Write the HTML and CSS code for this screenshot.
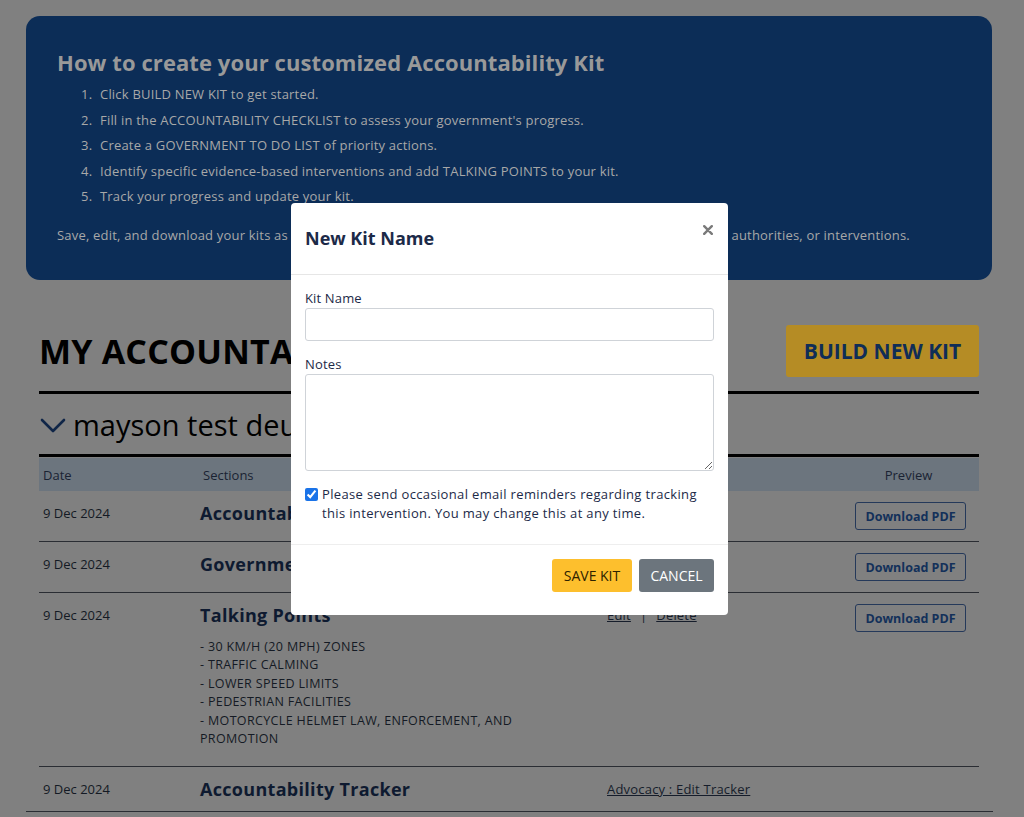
FILE: index.html
```html
<!DOCTYPE html>
<html lang="en">
<head>
<meta charset="utf-8">
<title>My Accountability Kits</title>
<link rel="stylesheet" href="styles.css">
</head>
<body>
<div class="page">
  <section class="intro">
    <h2 class="intro-title">How to create your customized Accountability Kit</h2>
    <ol class="intro-steps">
      <li>Click BUILD NEW KIT to get started.</li>
      <li>Fill in the ACCOUNTABILITY CHECKLIST to assess your government's progress.</li>
      <li>Create a GOVERNMENT TO DO LIST of priority actions.</li>
      <li>Identify specific evidence-based interventions and add TALKING POINTS to your kit.</li>
      <li>Track your progress and update your kit.</li>
    </ol>
    <p class="intro-note">Save, edit, and download your kits as PDFs. Create as many kits as you need for countries, regions, districts, authorities, or interventions.</p>
  </section>

  <main class="kits">
    <div class="kits-head">
      <h1 class="kits-title">MY ACCOUNTABILITY KITS</h1>
      <button class="build-btn">BUILD NEW KIT</button>
    </div>

    <div class="kit-name">
      <svg class="chevron" width="26" height="16" viewBox="0 0 26 16"><path d="M2 2 L13 13 L24 2" fill="none" stroke="#0f2547" stroke-width="2.6" stroke-linecap="round" stroke-linejoin="round"/></svg>
      <span>mayson test deux</span>
    </div>

    <div class="table">
      <div class="trow thead">
        <div>Date</div>
        <div class="th-sections">Sections</div>
        <div>Actions</div>
        <div class="center">Preview</div>
      </div>
      <div class="trow">
        <div class="date">9 Dec 2024</div>
        <div class="section-title">Accountability Checklist</div>
        <div class="actions"><a href="#">Edit</a><span class="sep">|</span><a href="#">Delete</a></div>
        <div class="center"><button class="pdf-btn">Download PDF</button></div>
      </div>
      <div class="trow">
        <div class="date">9 Dec 2024</div>
        <div class="section-title">Government To Do List</div>
        <div class="actions"><a href="#">Edit</a><span class="sep">|</span><a href="#">Delete</a></div>
        <div class="center"><button class="pdf-btn">Download PDF</button></div>
      </div>
      <div class="trow tall">
        <div class="date">9 Dec 2024</div>
        <div>
          <div class="section-title">Talking Points</div>
          <ul class="points">
            <li>- 30 KM/H (20 MPH) ZONES</li>
            <li>- TRAFFIC CALMING</li>
            <li>- LOWER SPEED LIMITS</li>
            <li>- PEDESTRIAN FACILITIES</li>
            <li>- MOTORCYCLE HELMET LAW, ENFORCEMENT, AND PROMOTION</li>
          </ul>
        </div>
        <div class="actions"><a href="#">Edit</a><span class="sep">|</span><a href="#">Delete</a></div>
        <div class="center"><button class="pdf-btn">Download PDF</button></div>
      </div>
      <div class="trow last">
        <div class="date">9 Dec 2024</div>
        <div class="section-title">Accountability Tracker</div>
        <div class="actions"><a href="#">Advocacy : Edit Tracker</a></div>
        <div></div>
      </div>
    </div>
    <div class="end-rule"></div>
  </main>
</div>

<div class="modal" role="dialog" aria-labelledby="modal-title">
  <div class="modal-header">
    <h3 id="modal-title" class="modal-title">New Kit Name</h3>
    <button class="modal-close" aria-label="Close"><svg width="10" height="10" viewBox="0 0 10 10"><path d="M1.2 1.2 L8.8 8.8 M8.8 1.2 L1.2 8.8" stroke="#7a7a7a" stroke-width="2.4" stroke-linecap="round"/></svg></button>
  </div>
  <div class="modal-body">
    <label class="field-label" for="kit-name">Kit Name</label>
    <input id="kit-name" class="field-input" type="text">
    <label class="field-label notes-label" for="kit-notes">Notes</label>
    <textarea id="kit-notes" class="field-textarea"></textarea>
    <label class="check-row">
      <input type="checkbox" checked class="check">
      <span>Please send occasional email reminders regarding tracking this intervention. You may change this at any time.</span>
    </label>
  </div>
  <div class="modal-footer">
    <button class="btn-save">SAVE KIT</button>
    <button class="btn-cancel">CANCEL</button>
  </div>
</div>
</body>
</html>
```

FILE: styles.css
```css
* { box-sizing: border-box; }

html, body {
  margin: 0;
  padding: 0;
}

body {
  background: #808080;
  font-family: "Open Sans", "Noto Sans", sans-serif;
  color: #141a24;
  position: relative;
  min-height: 817px;
  overflow: hidden;
}

.page {
  padding-top: 16px;
}

/* Intro box */
.intro {
  margin: 0 32px 0 26px;
  height: 264px;
  background: #0c2d57;
  border-radius: 14px;
  padding: 33px 31px 0 31px;
}

.intro-title {
  margin: 0;
  font-size: 22px;
  line-height: 26px;
  font-weight: 700;
  letter-spacing: 0.08px;
  color: #999;
}

.intro-steps {
  list-style: none;
  counter-reset: step;
  margin: 7px 0 0 0;
  padding-left: 24px;
  font-size: 13px;
  line-height: 25.5px;
  letter-spacing: 0.2px;
  color: #a8a8a8;
}

.intro-steps li {
  counter-increment: step;
}

.intro-steps li::before {
  content: counter(step) ".";
  display: inline-block;
  width: 19px;
}

.intro-note {
  margin: 13px 0 0 0;
  font-size: 13px;
  line-height: 25.5px;
  letter-spacing: 0.2px;
  color: #a8a8a8;
  white-space: nowrap;
}

/* Kits area */
.kits {
  margin: 45px 45px 0 39px;
  width: 940px;
}

.kits-head {
  display: flex;
  justify-content: space-between;
  align-items: center;
  padding-bottom: 14px;
  border-bottom: 3px solid #000;
}

.kits-title {
  margin: 0;
  font-size: 34px;
  line-height: 52px;
  font-weight: 700;
  color: #000;
  letter-spacing: 0.2px;
}

.build-btn {
  width: 193px;
  height: 52px;
  border: none;
  border-radius: 3px;
  background: #b58c25;
  color: #0f2d57;
  font-family: inherit;
  font-size: 21px;
  font-weight: 700;
}

.kit-name {
  display: flex;
  align-items: center;
  gap: 7px;
  height: 63px;
  border-bottom: 3px solid #000;
  font-size: 29px;
  color: #000;
}

.chevron {
  margin-left: 1px;
  margin-top: 4px;
}

/* Table */
.table {
  margin-top: 1px;
}

.trow {
  display: grid;
  grid-template-columns: 157px 407px 239px 137px;
  border-bottom: 1px solid #2a2d33;
  padding: 10px 0 0 4px;
  min-height: 51px;
}

.trow > div {
  padding-right: 12px;
}

.thead {
  background: #6c757e;
  min-height: 33px;
  height: 33px;
  padding: 0 0 0 4px;
  align-items: center;
  border-bottom: none;
  font-size: 13px;
  color: #1a2333;
}

.th-sections {
  padding-left: 3px;
}

.center {
  text-align: center;
}

.date {
  font-size: 13px;
  line-height: 25px;
  color: #141a24;
}

.section-title {
  font-size: 18px;
  font-weight: 700;
  line-height: 24px;
  letter-spacing: 0.3px;
  color: #0e1a30;
}

.actions {
  font-size: 13px;
  line-height: 24px;
  letter-spacing: 0.2px;
}

.actions a {
  color: #161d2b;
  text-decoration: underline;
}

.sep {
  margin: 0 9px;
  color: #161d2b;
}

.pdf-btn {
  margin-top: 1px;
  width: 111px;
  height: 28px;
  padding: 0;
  border: 1px solid #25395a;
  border-radius: 3px;
  background: transparent;
  color: #13305a;
  font-family: inherit;
  font-size: 12.5px;
  font-weight: 700;
  position: relative;
  left: 2px;
}

.tall {
  min-height: 174px;
}

.points {
  list-style: none;
  margin: 11px 0 0 0;
  padding: 0;
  width: 345px;
  font-size: 12.5px;
  line-height: 18.4px;
  letter-spacing: 0.35px;
  color: #141a24;
}

.last {
  min-height: 44px;
  border-bottom: none;
}

.end-rule {
  margin-left: -13px;
  width: 967px;
  border-top: 1px solid #2a2d33;
}

/* Modal */
.modal {
  position: absolute;
  left: 291px;
  top: 203px;
  width: 437px;
  height: 412px;
  background: #fff;
  border-radius: 4px;
  color: #1c2a48;
}

.modal-header {
  display: flex;
  justify-content: space-between;
  align-items: flex-start;
  height: 72px;
  padding: 23px 14px 0 14px;
  border-bottom: 1px solid #e6e6e6;
}

.modal-title {
  margin: 0;
  font-size: 18px;
  line-height: 24px;
  font-weight: 700;
  color: #1c2a48;
}

.modal-close {
  border: none;
  background: none;
  padding: 0;
  margin-top: -1px;
  margin-right: 1px;
  line-height: 0;
}

.modal-body {
  padding: 14px 14px 0 14px;
  height: 270px;
  border-bottom: 1px solid #eee;
}

.field-label {
  display: block;
  font-size: 13px;
  line-height: 18px;
  margin-bottom: 1px;
  letter-spacing: 0.15px;
}

.field-input {
  display: block;
  width: 409px;
  height: 33px;
  border: 1px solid #cfd3d8;
  border-radius: 3px;
  background: #fff;
}

.notes-label {
  margin-top: 14px;
}

.field-textarea {
  display: block;
  width: 409px;
  height: 97px;
  border: 1px solid #cfd3d8;
  border-radius: 3px;
  background: #fff;
  resize: vertical;
}

.check-row {
  display: flex;
  align-items: flex-start;
  gap: 4px;
  margin-top: 14px;
  font-size: 13px;
  line-height: 19px;
  letter-spacing: 0.35px;
}

.check {
  margin: 3px 0 0 0;
  width: 13px;
  height: 13px;
  accent-color: #1a73e8;
  flex: none;
}

.check-row span {
  padding-right: 14px;
}

.modal-footer {
  display: flex;
  justify-content: flex-end;
  gap: 7px;
  padding: 14px 14px 0 14px;
}

.btn-save,
.btn-cancel {
  height: 33px;
  border: none;
  border-radius: 3px;
  font-family: inherit;
  font-size: 14px;
}

.btn-save {
  width: 80px;
  background: #fdbf2d;
  color: #2e2200;
}

.btn-cancel {
  width: 75px;
  background: #6c757d;
  color: #fff;
}
```
